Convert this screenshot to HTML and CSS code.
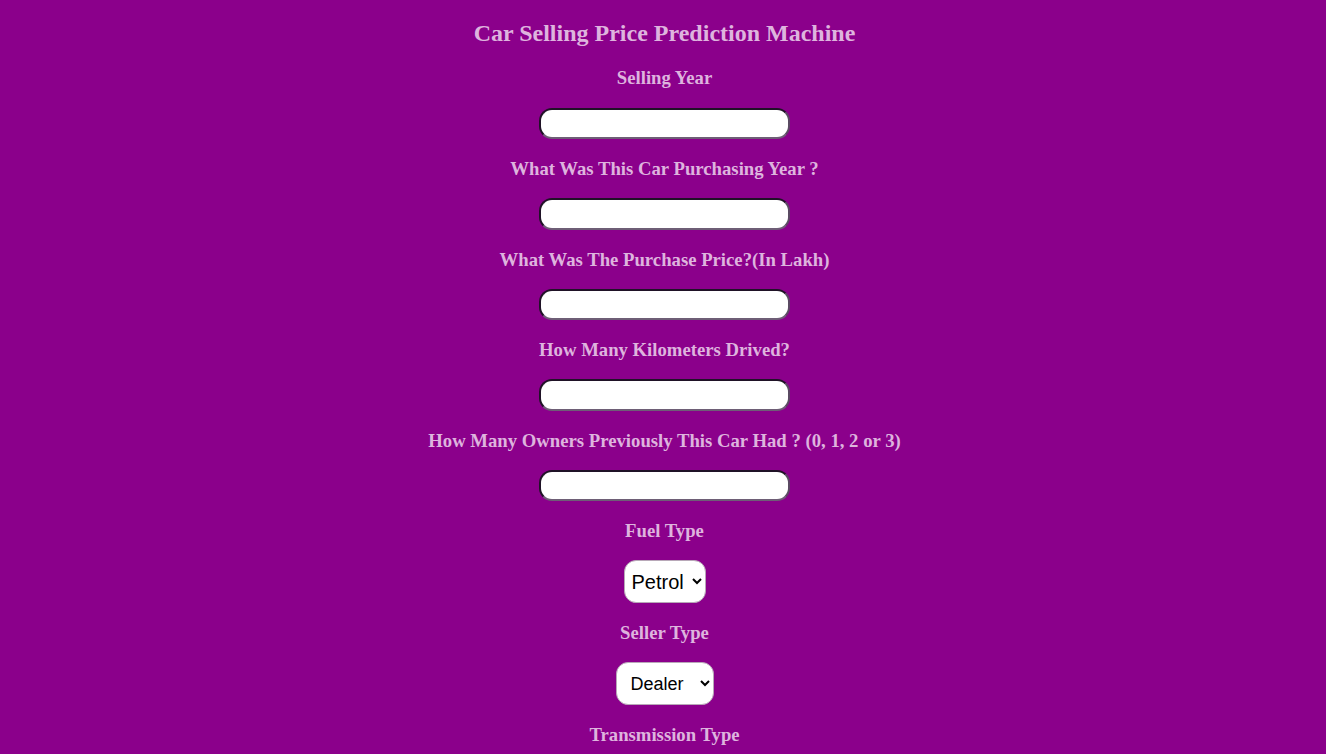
FILE: index.html
```html
<!DOCTYPE html>
<html lang="en">
<head>
<meta charset="utf-8">
<title>Car Selling Price Prediction</title>
<link rel="stylesheet" href="styles.css">
</head>
<body>
<div class="page">
  <h2 class="title">Car Selling Price Prediction Machine</h2>
  <form class="form">
    <h3 class="label">Selling Year</h3>
    <div class="field"><input class="text-input" type="text"></div>
    <h3 class="label">What Was This Car Purchasing Year ?</h3>
    <div class="field"><input class="text-input" type="text"></div>
    <h3 class="label">What Was The Purchase Price?(In Lakh)</h3>
    <div class="field"><input class="text-input" type="text"></div>
    <h3 class="label">How Many Kilometers Drived?</h3>
    <div class="field"><input class="text-input" type="text"></div>
    <h3 class="label">How Many Owners Previously This Car Had ? (0, 1, 2 or 3)</h3>
    <div class="field"><input class="text-input" type="text"></div>
    <h3 class="label">Fuel Type</h3>
    <div class="field">
      <select class="select select-fuel">
        <option>Petrol</option>
        <option>Diesel</option>
        <option>CNG</option>
      </select>
    </div>
    <h3 class="label">Seller Type</h3>
    <div class="field">
      <select class="select select-seller">
        <option>Dealer</option>
        <option>Individual</option>
      </select>
    </div>
    <h3 class="label">Transmission Type</h3>
    <div class="field">
      <select class="select select-trans">
        <option>Manual</option>
        <option>Automatic</option>
      </select>
    </div>
  </form>
</div>
</body>
</html>
```

FILE: styles.css
```css
html, body {
  background: #8b008b;
}
body {
  margin: 0;
  font-family: "Liberation Sans", Arial, sans-serif;
  color: #deb4de;
}
.page {
  text-align: center;
  padding-left: 3px;
  padding-top: 1px;
  padding-bottom: 40px;
  font-family: "Liberation Serif", "Times New Roman", serif;
}
.title {
  font-size: 24px;
  font-weight: bold;
  margin: 19.3px 0 20.2px;
}
.label {
  font-size: 18.72px;
  font-weight: bold;
  margin: 18.72px 0;
  line-height: 21.6px;
}
.field {
  display: flex;
  justify-content: center;
}
.text-input {
  box-sizing: border-box;
  width: 251px;
  height: 31.5px;
  border-radius: 13px;
  border-width: 2px;
  border-style: solid;
  border-color: #1f1226 #5a4a62 #6e5e76 #1f1226;
  background: #fff;
  padding: 2px 10px;
  font-family: "Liberation Sans", Arial, sans-serif;
  font-size: 16px;
  outline: none;
}
.select {
  box-sizing: border-box;
  height: 43px;
  border: 1px solid #b8a8b8;
  border-radius: 12px;
  background: #fff;
  color: #000;
  font-family: "Liberation Sans", Arial, sans-serif;
}
.select-fuel {
  font-size: 20px;
  width: 82px;
  padding: 0 2px 0 3px;
}
.select-seller,
.select-trans {
  font-size: 18px;
  width: 98px;
  padding: 0 2px 0 10px;
}
```
